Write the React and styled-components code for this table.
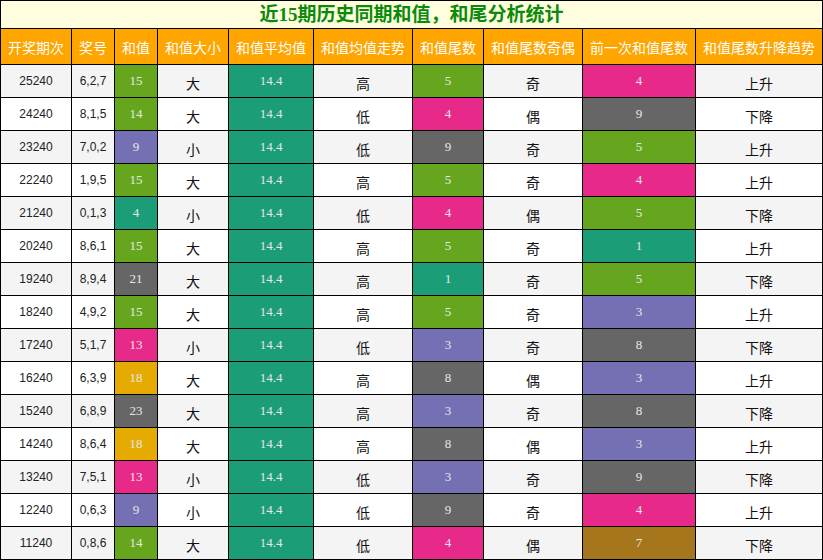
import React from "react";
import styled, { createGlobalStyle } from "styled-components";

const GlobalStyle = createGlobalStyle`
  body {
    margin: 0;
    background: #fff;
    font-family: "Noto Sans CJK SC", sans-serif;
  }
`;

const GREEN = "#66a61e";
const TEAL = "#1b9e77";
const PURPLE = "#7570b3";
const PINK = "#e7298a";
const GRAY = "#666666";
const GOLD = "#e6ab02";
const BROWN = "#a6761d";

const colors = { g: GREEN, t: TEAL, p: PURPLE, k: PINK, y: GRAY, o: GOLD, b: BROWN };

const heads = [
  "开奖期次",
  "奖号",
  "和值",
  "和值大小",
  "和值平均值",
  "和值均值走势",
  "和值尾数",
  "和值尾数奇偶",
  "前一次和值尾数",
  "和值尾数升降趋势",
];

const widths = [71, 43, 43, 71, 85, 99, 71, 99, 113, 127];

// issue, numbers, sum, sumColor, size, trend, tail, tailColor, parity, prev, prevColor, direction
const rows = [
  ["25240", "6,2,7", 15, "g", "大", "高", 5, "g", "奇", 4, "k", "上升"],
  ["24240", "8,1,5", 14, "g", "大", "低", 4, "k", "偶", 9, "y", "下降"],
  ["23240", "7,0,2", 9, "p", "小", "低", 9, "y", "奇", 5, "g", "上升"],
  ["22240", "1,9,5", 15, "g", "大", "高", 5, "g", "奇", 4, "k", "上升"],
  ["21240", "0,1,3", 4, "t", "小", "低", 4, "k", "偶", 5, "g", "下降"],
  ["20240", "8,6,1", 15, "g", "大", "高", 5, "g", "奇", 1, "t", "上升"],
  ["19240", "8,9,4", 21, "y", "大", "高", 1, "t", "奇", 5, "g", "下降"],
  ["18240", "4,9,2", 15, "g", "大", "高", 5, "g", "奇", 3, "p", "上升"],
  ["17240", "5,1,7", 13, "k", "小", "低", 3, "p", "奇", 8, "y", "下降"],
  ["16240", "6,3,9", 18, "o", "大", "高", 8, "y", "偶", 3, "p", "上升"],
  ["15240", "6,8,9", 23, "y", "大", "高", 3, "p", "奇", 8, "y", "下降"],
  ["14240", "8,6,4", 18, "o", "大", "高", 8, "y", "偶", 3, "p", "上升"],
  ["13240", "7,5,1", 13, "k", "小", "低", 3, "p", "奇", 9, "y", "下降"],
  ["12240", "0,6,3", 9, "p", "小", "低", 9, "y", "奇", 4, "k", "上升"],
  ["11240", "0,8,6", 14, "g", "大", "低", 4, "k", "偶", 7, "b", "下降"],
];

function App() {
  return (
    <>
      <GlobalStyle />
      <Table>
        <colgroup>
          {widths.map((w, i) => (
            <col key={i} style={{ width: w }} />
          ))}
        </colgroup>
        <thead>
          <tr>
            <TitleCell colSpan={10}>近15期历史同期和值，和尾分析统计</TitleCell>
          </tr>
          <tr>
            {heads.map((h) => (
              <HeadCell key={h}>{h}</HeadCell>
            ))}
          </tr>
        </thead>
        <tbody>
          {rows.map((r, i) => (
            <Row key={r[0]} $alt={i % 2 === 0}>
              <Cell>{r[0]}</Cell>
              <Cell>{r[1]}</Cell>
              <ColorCell $bg={colors[r[3]]}>{r[2]}</ColorCell>
              <WordCell>{r[4]}</WordCell>
              <ColorCell $bg={TEAL}>14.4</ColorCell>
              <WordCell>{r[5]}</WordCell>
              <ColorCell $bg={colors[r[7]]}>{r[6]}</ColorCell>
              <WordCell>{r[8]}</WordCell>
              <ColorCell $bg={colors[r[10]]}>{r[9]}</ColorCell>
              <WordCell>{r[11]}</WordCell>
            </Row>
          ))}
        </tbody>
      </Table>
    </>
  );
}
export default App;

const Table = styled.table`
  width: 823px;
  table-layout: fixed;
  border-collapse: collapse;
  border: 1px solid #000;

  td,
  th {
    border: 1px solid #000;
    padding: 0;
    text-align: center;
    vertical-align: middle;
    line-height: 18px;
  }
`;

const TitleCell = styled.th`
  height: 27px;
  background: #ffffe0;
  color: #0b8a0b;
  font-family: "Liberation Serif", "Noto Sans CJK SC", serif;
  font-size: 19px;
  font-weight: bold;
  line-height: 24px;
`;

const HeadCell = styled.th`
  height: 35px;
  background: #ffa500;
  color: #fff;
  font-size: 14px;
  font-weight: normal;
  white-space: nowrap;
`;

const Row = styled.tr`
  background: ${(p) => (p.$alt ? "#f4f4f4" : "#fff")};
`;

const Cell = styled.td`
  height: 32px;
  color: #222;
  font-family: "Liberation Sans", "Noto Sans CJK SC", sans-serif;
  font-size: 12px;
`;

const ColorCell = styled.td`
  height: 32px;
  background: ${(p) => p.$bg};
  color: #e6e6e6;
  font-family: "Liberation Serif", serif;
  font-size: 13px;
`;

const WordCell = styled.td`
  height: 28px;
  color: #111;
  font-family: "Noto Sans CJK SC", sans-serif;
  font-size: 14px;
  && {
    padding-top: 4px;
  }
`;
